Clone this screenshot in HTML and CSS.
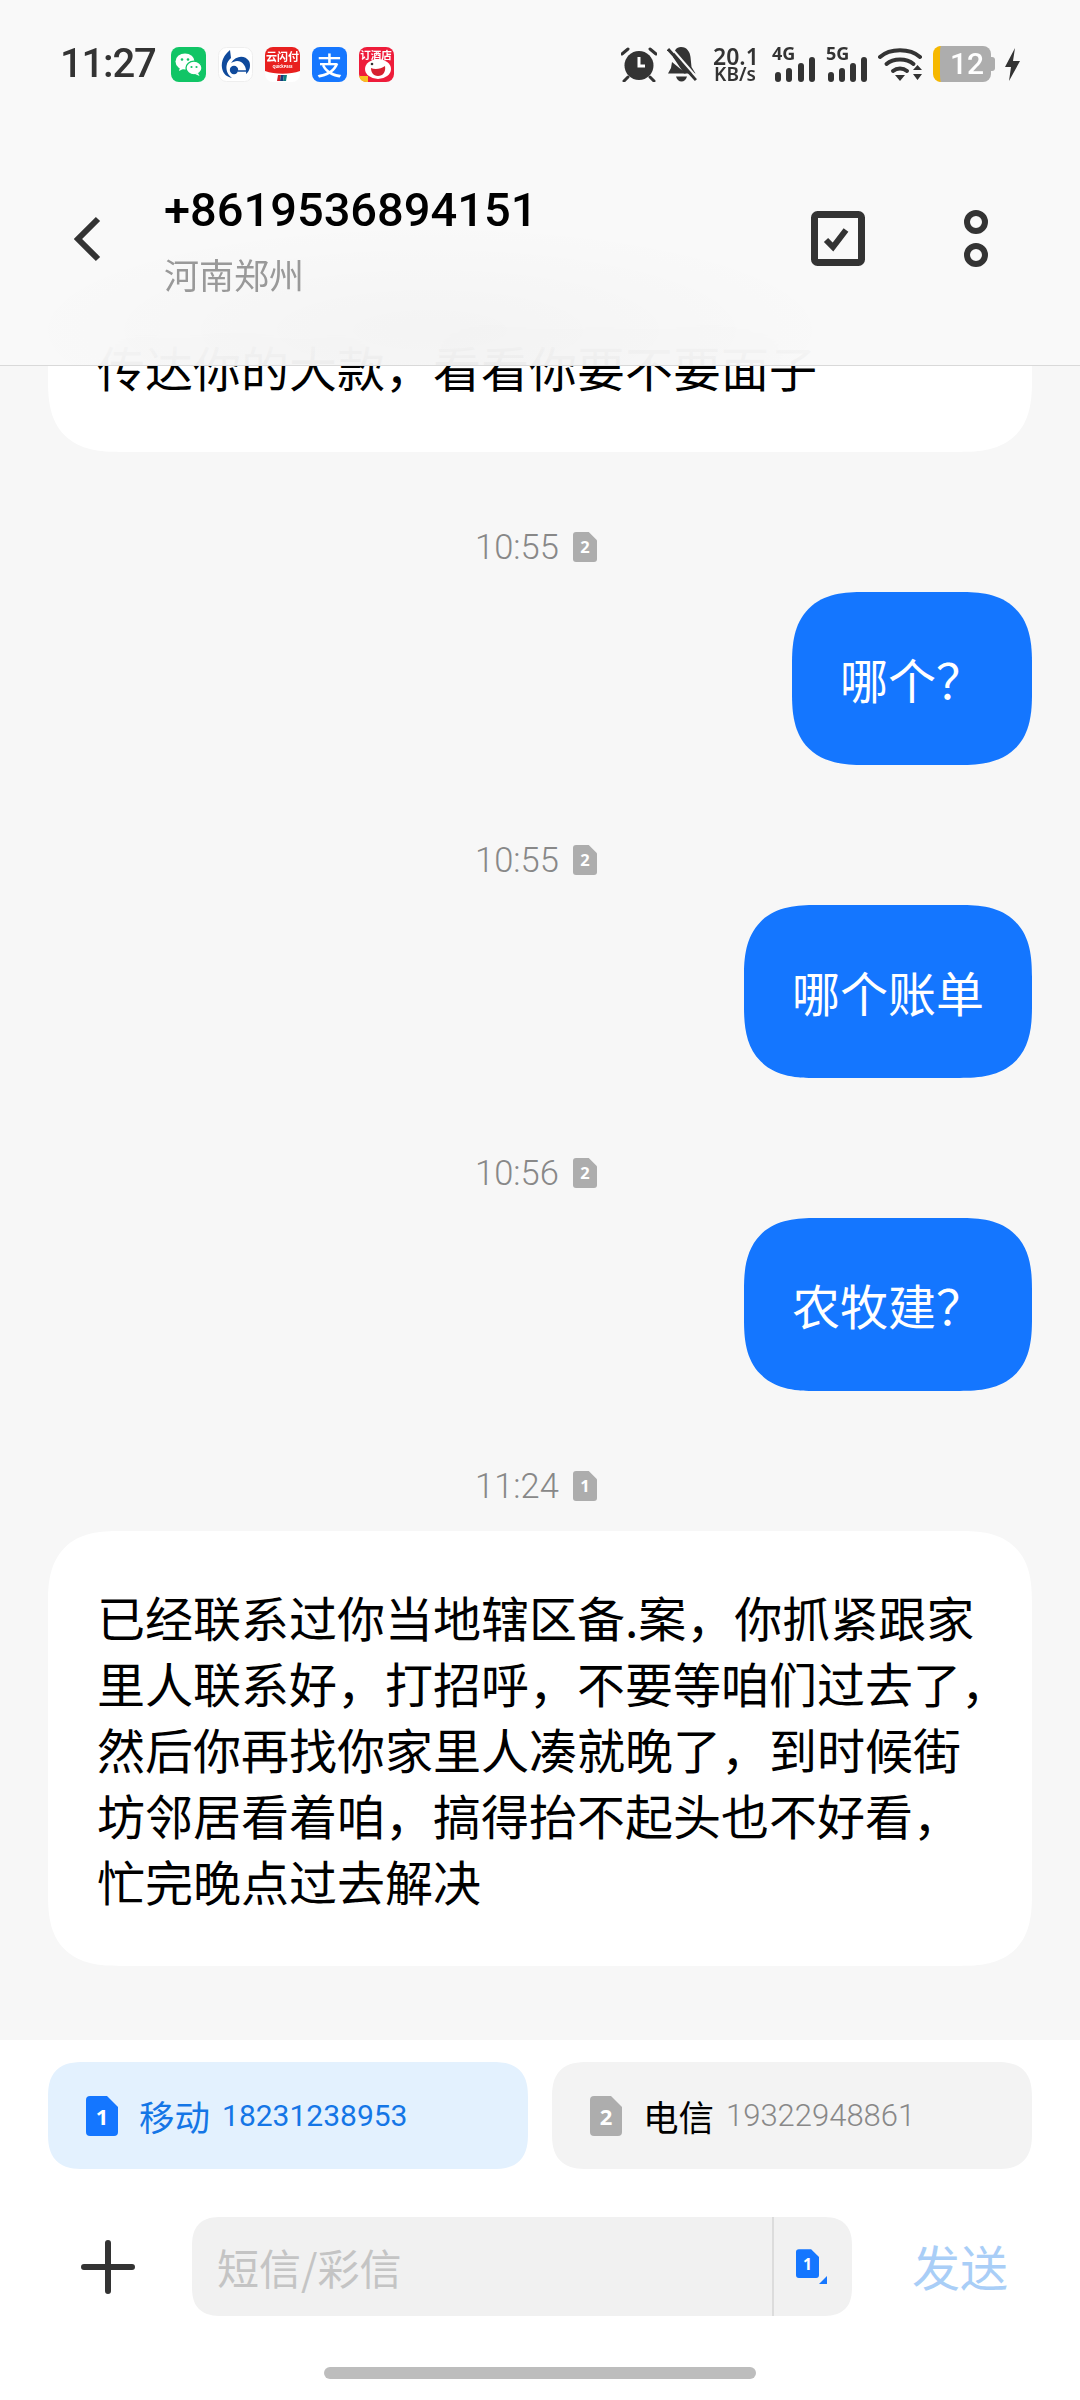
FILE: index.html
```html
<!DOCTYPE html>
<html lang="zh-CN">
<head>
    <meta charset="UTF-8">
    <meta name="viewport" content="width=device-width, initial-scale=1.0">
    <title>短信</title>
    <link rel="stylesheet" href="styles.css">
</head>
<body>
    <div class="page">
        <header class="top">
            <div class="status">
                <span class="clock">11:27</span>
                <div class="apps">
                    <svg class="app" viewBox="0 0 35 35">
                        <rect width="35" height="35" rx="8" fill="#11c566"/>
                        <ellipse cx="14" cy="14.500" rx="9.500" ry="8" fill="#fff"/>
                        <path d="M9 20l-1 4 5-2.500z" fill="#fff"/>
                        <ellipse cx="23" cy="21" rx="8" ry="6.800" fill="#fff" stroke="#11c566" stroke-width="1.300"/>
                        <path d="M27 26l1.500 3-4.500-2z" fill="#fff"/>
                        <circle cx="11" cy="12.500" r="1.300" fill="#11c566"/>
                        <circle cx="17" cy="12.500" r="1.300" fill="#11c566"/>
                        <circle cx="20.500" cy="20" r="1.100" fill="#11c566"/>
                        <circle cx="25.500" cy="20" r="1.100" fill="#11c566"/>
                    </svg>
                    <svg class="app" viewBox="0 0 35 35">
                        <rect x=".5" y=".5" width="34" height="34" rx="8" fill="#fff" stroke="#eee"/>
                        <path d="M12 3C6 8 3 14 4 21c1 6 5 9 10 10-4-3-6-7-5.500-12 .5-4 2.500-6 4.500-8z" fill="#0f4a9c"/>
                        <path d="M13 16c5-8 14-8 18-2 2 4 1 10-3 13 1-7-3-13-9-13-2 0-4 1-6 2z" fill="#0f4a9c"/>
                        <circle cx="16" cy="23" r="4.200" fill="#0f4a9c"/>
                        <path d="M20 24h8" stroke="#0f4a9c" stroke-width="1.500"/>
                    </svg>
                    <svg class="app" viewBox="0 0 35 35">
                        <rect width="35" height="35" rx="8" fill="#fff"/>
                        <path d="M8 0h19a8 8 0 0 1 8 8v16c-10 3.500-25 3.500-35 0V8a8 8 0 0 1 8-8z" fill="#e8201f"/>
                        <text class="app-text" x="17.500" y="14" font-size="11">云闪付</text>
                        <text class="app-text" x="17.500" y="21" font-size="4">QuickPass</text>
                        <path d="M13 28h3l-1 6h-3z" fill="#d3202a"/>
                        <path d="M16 28h3l-1 6h-3z" fill="#143a7b"/>
                        <path d="M19 28h3l-1 6h-3z" fill="#107c7e"/>
                    </svg>
                    <div class="app app-alipay">支</div>
                    <svg class="app" viewBox="0 0 35 35">
                        <rect width="35" height="35" rx="8" fill="#ee1c3a"/>
                        <ellipse cx="19" cy="22" rx="13" ry="10" fill="#fff"/>
                        <path d="M12 21c4 2 10 1 14-2 1 6-2 10-7 10s-7-4-7-8z" fill="#d6202f"/>
                        <circle cx="13" cy="17" r="1.300" fill="#333"/>
                        <path d="M0 29h9v6H8a8 8 0 0 1-8-6z" fill="#f8c021"/>
                        <text class="app-text" x="17" y="12" font-size="10.500">订酒店</text>
                    </svg>
                </div>
                <div class="indicators">
                    <svg class="ic-alarm" viewBox="0 0 36 36">
                        <circle cx="18" cy="19.500" r="14.500" fill="#333"/>
                        <path d="M18 11v9h6" fill="none" stroke="#fff" stroke-width="3"/>
                        <path d="M1 8l6-5M35 8l-6-5M7 31l-4 4M29 31l4 4" stroke="#333" stroke-width="3" stroke-linecap="round"/>
                    </svg>
                    <svg class="ic-bell" viewBox="0 0 31 36">
                        <path d="M14 1c6 0 9 5 9.500 10l1 10 4 6.500H17L6 11C7 5 9 1 14 1z" fill="#333"/>
                        <path d="M5 16L4 22 1 27.500H19z" fill="#333"/>
                        <path d="M9 30.500h11c-1 3.500-3 5-5.500 5S10 34 9 30.500z" fill="#333"/>
                        <path d="M1 3l28 31" stroke="#333" stroke-width="3"/>
                        <path d="M3.500 1l27 31" stroke="#f9f9f9" stroke-width="2"/>
                    </svg>
                    <div class="speed">
                        <span class="speed-num">20.1</span>
                        <span class="speed-unit">KB/s</span>
                    </div>
                    <div class="signal">
                        <span class="net-label">4G</span>
                        <svg class="bars" viewBox="0 0 44 36">
                            <rect x="3" y="26" width="6" height="10" rx="3"/>
                            <rect x="14" y="22" width="6" height="14" rx="3"/>
                            <rect x="26" y="17" width="6" height="19" rx="3"/>
                            <rect x="37" y="11" width="6" height="25" rx="3"/>
                        </svg>
                    </div>
                    <div class="signal signal-b">
                        <span class="net-label">5G</span>
                        <svg class="bars" viewBox="0 0 42 36">
                            <rect x="2" y="26" width="6" height="10" rx="3"/>
                            <rect x="13" y="22" width="6" height="14" rx="3"/>
                            <rect x="24" y="17" width="6" height="19" rx="3"/>
                            <rect x="35" y="11" width="6" height="25" rx="3"/>
                        </svg>
                    </div>
                    <svg class="ic-wifi" viewBox="0 0 45 36">
                        <path d="M2 11c10-9 30-9 40 0" fill="none" stroke="#333" stroke-width="4" stroke-linecap="round"/>
                        <path d="M8.500 18c7-6 20-6 27 0" fill="none" stroke="#333" stroke-width="4" stroke-linecap="round"/>
                        <path d="M15 25c4-3.500 10-3.500 14 0" fill="none" stroke="#333" stroke-width="4" stroke-linecap="round"/>
                        <path d="M17 29h10l-5 6zM35 24l4.500-5 4.500 5zM35 28h9l-4.500 6z" fill="#333"/>
                    </svg>
                    <div class="battery">12</div>
                    <svg class="ic-bolt" viewBox="0 0 15 33">
                        <path d="M10 0L0 19h6L4 33 15 13H8z" fill="#333"/>
                    </svg>
                </div>
            </div>
            <div class="nav">
                <svg class="back" viewBox="0 0 27 46">
                    <path d="M24 3L4 23l20 20" fill="none" stroke="#333" stroke-width="6"/>
                </svg>
                <div class="contact">
                    <div class="contact-num">+8619536894151</div>
                    <div class="contact-area">河南郑州</div>
                </div>
                <svg class="ic-select" viewBox="0 0 54 55">
                    <rect x="3.500" y="3.500" width="47" height="48" rx="3" fill="none" stroke="#333" stroke-width="7"/>
                    <path d="M15 29l7 7 13-17" fill="none" stroke="#333" stroke-width="6"/>
                </svg>
                <svg class="ic-more" viewBox="0 0 24 57">
                    <circle cx="12" cy="12" r="9" fill="none" stroke="#333" stroke-width="6"/>
                    <circle cx="12" cy="45" r="9" fill="none" stroke="#333" stroke-width="6"/>
                </svg>
            </div>
        </header>

        <main class="list">
            <div class="bubble in">传达你的大款，看看你要不要面子</div>

            <div class="time"><span>10:55</span>
                <svg class="sim-tiny" viewBox="0 0 32 40"><path class="sim-gray" d="M4 0h17l11 11v25a4 4 0 0 1-4 4H4a4 4 0 0 1-4-4V4a4 4 0 0 1 4-4z"/><text class="sim-text" x="16" y="28" font-size="22">2</text></svg>
            </div>
            <div class="bubble out">哪个？</div>

            <div class="time"><span>10:55</span>
                <svg class="sim-tiny" viewBox="0 0 32 40"><path class="sim-gray" d="M4 0h17l11 11v25a4 4 0 0 1-4 4H4a4 4 0 0 1-4-4V4a4 4 0 0 1 4-4z"/><text class="sim-text" x="16" y="28" font-size="22">2</text></svg>
            </div>
            <div class="bubble out">哪个账单</div>

            <div class="time"><span>10:56</span>
                <svg class="sim-tiny" viewBox="0 0 32 40"><path class="sim-gray" d="M4 0h17l11 11v25a4 4 0 0 1-4 4H4a4 4 0 0 1-4-4V4a4 4 0 0 1 4-4z"/><text class="sim-text" x="16" y="28" font-size="22">2</text></svg>
            </div>
            <div class="bubble out">农牧建？</div>

            <div class="time"><span>11:24</span>
                <svg class="sim-tiny" viewBox="0 0 32 40"><path class="sim-gray" d="M4 0h17l11 11v25a4 4 0 0 1-4 4H4a4 4 0 0 1-4-4V4a4 4 0 0 1 4-4z"/><text class="sim-text" x="16" y="28" font-size="22">1</text></svg>
            </div>
            <div class="bubble in">已经联系过你当地辖区备.案，你抓紧跟家<br>里人联系好，打招呼，不要等咱们过去了，<br>然后你再找你家里人凑就晚了，到时候街<br>坊邻居看着咱，搞得抬不起头也不好看，<br>忙完晚点过去解决</div>
        </main>

        <footer class="bottom">
            <div class="sims">
                <div class="sim-chip active">
                    <svg class="sim-icon" viewBox="0 0 32 40"><path class="sim-blue" d="M4 0h17l11 11v25a4 4 0 0 1-4 4H4a4 4 0 0 1-4-4V4a4 4 0 0 1 4-4z"/><text class="sim-text" x="16" y="29" font-size="22">1</text></svg>
                    <span class="sim-name">移动</span>
                    <span class="sim-num">18231238953</span>
                </div>
                <div class="sim-chip">
                    <svg class="sim-icon" viewBox="0 0 32 40"><path class="sim-gray" d="M4 0h17l11 11v25a4 4 0 0 1-4 4H4a4 4 0 0 1-4-4V4a4 4 0 0 1 4-4z"/><text class="sim-text" x="16" y="29" font-size="22">2</text></svg>
                    <span class="sim-name">电信</span>
                    <span class="sim-num">19322948861</span>
                </div>
            </div>
            <div class="compose">
                <svg class="plus" viewBox="0 0 54 54">
                    <path d="M27 3v48M3 27h48" stroke="#333" stroke-width="6" stroke-linecap="round"/>
                </svg>
                <div class="input">
                    <span class="placeholder">短信/彩信</span>
                    <div class="sim-switch">
                        <svg class="sim-small" viewBox="0 0 32 40"><path class="sim-blue" d="M4 0h17l11 11v25a4 4 0 0 1-4 4H4a4 4 0 0 1-4-4V4a4 4 0 0 1 4-4z"/><text class="sim-text" x="16" y="29" font-size="22">1</text></svg>
                        <svg class="sim-arrow" viewBox="0 0 8 8"><path d="M8 0v8H0z" fill="#1677ff"/></svg>
                    </div>
                </div>
                <span class="send">发送</span>
            </div>
            <div class="home-bar"></div>
        </footer>
    </div>
</body>
</html>
```

FILE: styles.css
```css
* {
    box-sizing: border-box;
}
body {
    margin: 0;
    font-family: Roboto, "Noto Sans CJK SC", sans-serif;
    color: #000;
    background: #f7f7f7;
}
.page {
    position: relative;
    width: 1080px;
    height: 2400px;
    display: flex;
    flex-direction: column;
    overflow: hidden;
}

/* header floats over the list, blurred like the real one */
.top {
    position: absolute;
    top: 0;
    left: 0;
    right: 0;
    height: 366px;
    background:
        radial-gradient(ellipse 420px 110px at 430px 330px, rgba(0, 0, 0, 0.025), transparent),
        rgba(249, 249, 249, 0.94);
    backdrop-filter: blur(30px);
    border-bottom: 1px solid #d9d9d9;
    z-index: 2;
}
.status {
    display: flex;
    align-items: center;
    height: 82px;
    padding: 46px 60px 0 60px;
    color: #333;
}
.clock {
    width: 96px;
    font-size: 40px;
    font-weight: 500;
    line-height: 36px;
    letter-spacing: -1.2px;
}
.apps {
    display: flex;
    gap: 12px;
    margin-left: 15px;
}
.app {
    width: 35px;
    height: 35px;
}
.app-text {
    fill: #fff;
    font-family: "Noto Sans CJK SC", sans-serif;
    font-weight: 700;
    text-anchor: middle;
}
.app-alipay {
    border-radius: 8px;
    background: #1677ff;
    color: #fff;
    font-family: "Noto Sans CJK SC", sans-serif;
    font-size: 25px;
    font-weight: 500;
    line-height: 35px;
    text-align: center;
}
.indicators {
    display: flex;
    align-items: center;
    gap: 10px;
    margin-left: auto;
}
.ic-alarm {
    width: 36px;
    height: 36px;
}
.ic-bell {
    width: 31px;
    height: 36px;
}
.speed {
    display: flex;
    flex-direction: column;
    width: 44px;
    margin: 0 5px;
    white-space: nowrap;
    font-family: "Noto Sans", sans-serif;
    font-weight: 600;
    text-align: center;
}
.speed-num {
    font-size: 23px;
    line-height: 20px;
}
.speed-unit {
    font-size: 19px;
    line-height: 17px;
}
.signal {
    position: relative;
    width: 44px;
    height: 36px;
}
.signal-b {
    width: 42px;
}
.bars {
    display: block;
    width: 100%;
    height: 36px;
    fill: #333;
}
.net-label {
    position: absolute;
    left: 0;
    top: -1px;
    font-family: "Noto Sans", sans-serif;
    font-size: 18px;
    font-weight: 700;
    line-height: 17px;
}
.ic-wifi {
    width: 45px;
    height: 36px;
}
.battery {
    position: relative;
    width: 58px;
    height: 36px;
    margin-right: 4px;
    padding-left: 3px;
    border-left: 7px solid #f6b800;
    border-radius: 8px;
    background: #adadad;
    color: #fff;
    font-size: 30px;
    font-weight: 500;
    line-height: 36px;
    text-align: center;
}
.battery::after {
    content: "";
    position: absolute;
    right: -4px;
    top: 11px;
    width: 4px;
    height: 14px;
    border-radius: 0 3px 3px 0;
    background: #adadad;
}
.ic-bolt {
    width: 15px;
    height: 33px;
}
.nav {
    display: flex;
    align-items: center;
    height: 121px;
    margin-top: 96px;
    padding: 0 92px 0 74px;
}
.back {
    width: 27px;
    height: 46px;
    margin-right: 63px;
}
.contact {
    flex: 1;
}
.contact-num {
    font-size: 47px;
    font-weight: 500;
    line-height: 64px;
}
.contact-area {
    margin-top: 7px;
    font-family: "Noto Sans CJK SC", sans-serif;
    font-size: 35px;
    line-height: 50px;
    color: #999;
}
.ic-select {
    width: 54px;
    height: 55px;
    margin-right: 99px;
}
.ic-more {
    width: 24px;
    height: 57px;
}

.list {
    flex: 1;
    display: flex;
    flex-direction: column;
    padding: 281px 48px 0;
    min-height: 0;
    background: #f7f7f7;
}
.bubble {
    padding: 53px 48px 54px;
    border-radius: 72px;
    corner-shape: superellipse(1.4);
    font-family: "Noto Sans CJK SC", sans-serif;
    font-size: 48px;
    line-height: 66px;
}
.in {
    padding: 52px 40px 53px 49px;
    background: #fff;
    white-space: nowrap;
}
.out {
    align-self: flex-end;
    background: #1476ff;
    color: #fff;
}
.time {
    display: flex;
    align-items: center;
    justify-content: center;
    gap: 14px;
    height: 46px;
    margin: 72px 0 22px;
    padding-right: 8px;
    font-size: 34.5px;
    font-weight: 300;
    color: #888;
}
.sim-tiny {
    width: 24px;
    height: 30px;
}
.sim-blue {
    fill: #1476ff;
}
.sim-gray {
    fill: #adadad;
}
.sim-text {
    fill: #fff;
    font-family: "Noto Sans", sans-serif;
    font-weight: 700;
    text-anchor: middle;
}

.bottom {
    height: 360px;
    padding-top: 22px;
    background: #fff;
}
.sims {
    display: flex;
    gap: 24px;
    padding: 0 48px;
}
.sim-chip {
    flex: 1;
    display: flex;
    align-items: center;
    height: 107px;
    padding-left: 38px;
    border-radius: 36px;
    corner-shape: superellipse(1.4);
    background: #f3f3f3;
}
.sim-chip.active {
    background: #e3f1fe;
    color: #1476e6;
}
.sim-icon {
    width: 32px;
    height: 40px;
    margin-right: 21px;
}
.sim-name {
    font-family: "Noto Sans CJK SC", sans-serif;
    font-size: 35.5px;
}
.sim-num {
    margin-left: 12px;
    font-size: 31px;
    font-weight: 300;
    color: #888;
}
.active .sim-num {
    font-size: 30px;
    font-weight: 400;
    color: #1476e6;
}
.compose {
    display: flex;
    align-items: center;
    height: 99px;
    margin-top: 48px;
    padding-left: 81px;
}
.plus {
    width: 54px;
    height: 54px;
    margin-right: 57px;
}
.input {
    display: flex;
    align-items: stretch;
    width: 660px;
    height: 99px;
    border-radius: 30px;
    corner-shape: superellipse(1.4);
    background: #f1f1f1;
}
.placeholder {
    flex: 1;
    padding-left: 25px;
    font-family: "Noto Sans CJK SC", sans-serif;
    font-size: 42px;
    line-height: 99px;
    color: #c4c4c4;
}
.sim-switch {
    display: flex;
    align-items: center;
    width: 80px;
    padding: 0 0 6px 22px;
    border-left: 2px solid #dcdcdc;
}
.sim-small {
    width: 23px;
    height: 29px;
}
.sim-arrow {
    width: 8px;
    height: 8px;
    align-self: flex-end;
    margin-bottom: 26px;
}
.send {
    margin-left: 60px;
    padding-bottom: 3px;
    font-family: "Noto Sans CJK SC", sans-serif;
    font-size: 48px;
    color: #a9cef7;
}
.home-bar {
    width: 432px;
    height: 12px;
    margin: 51px auto 0 324px;
    border-radius: 6px;
    background: #bdbdbd;
}
```
